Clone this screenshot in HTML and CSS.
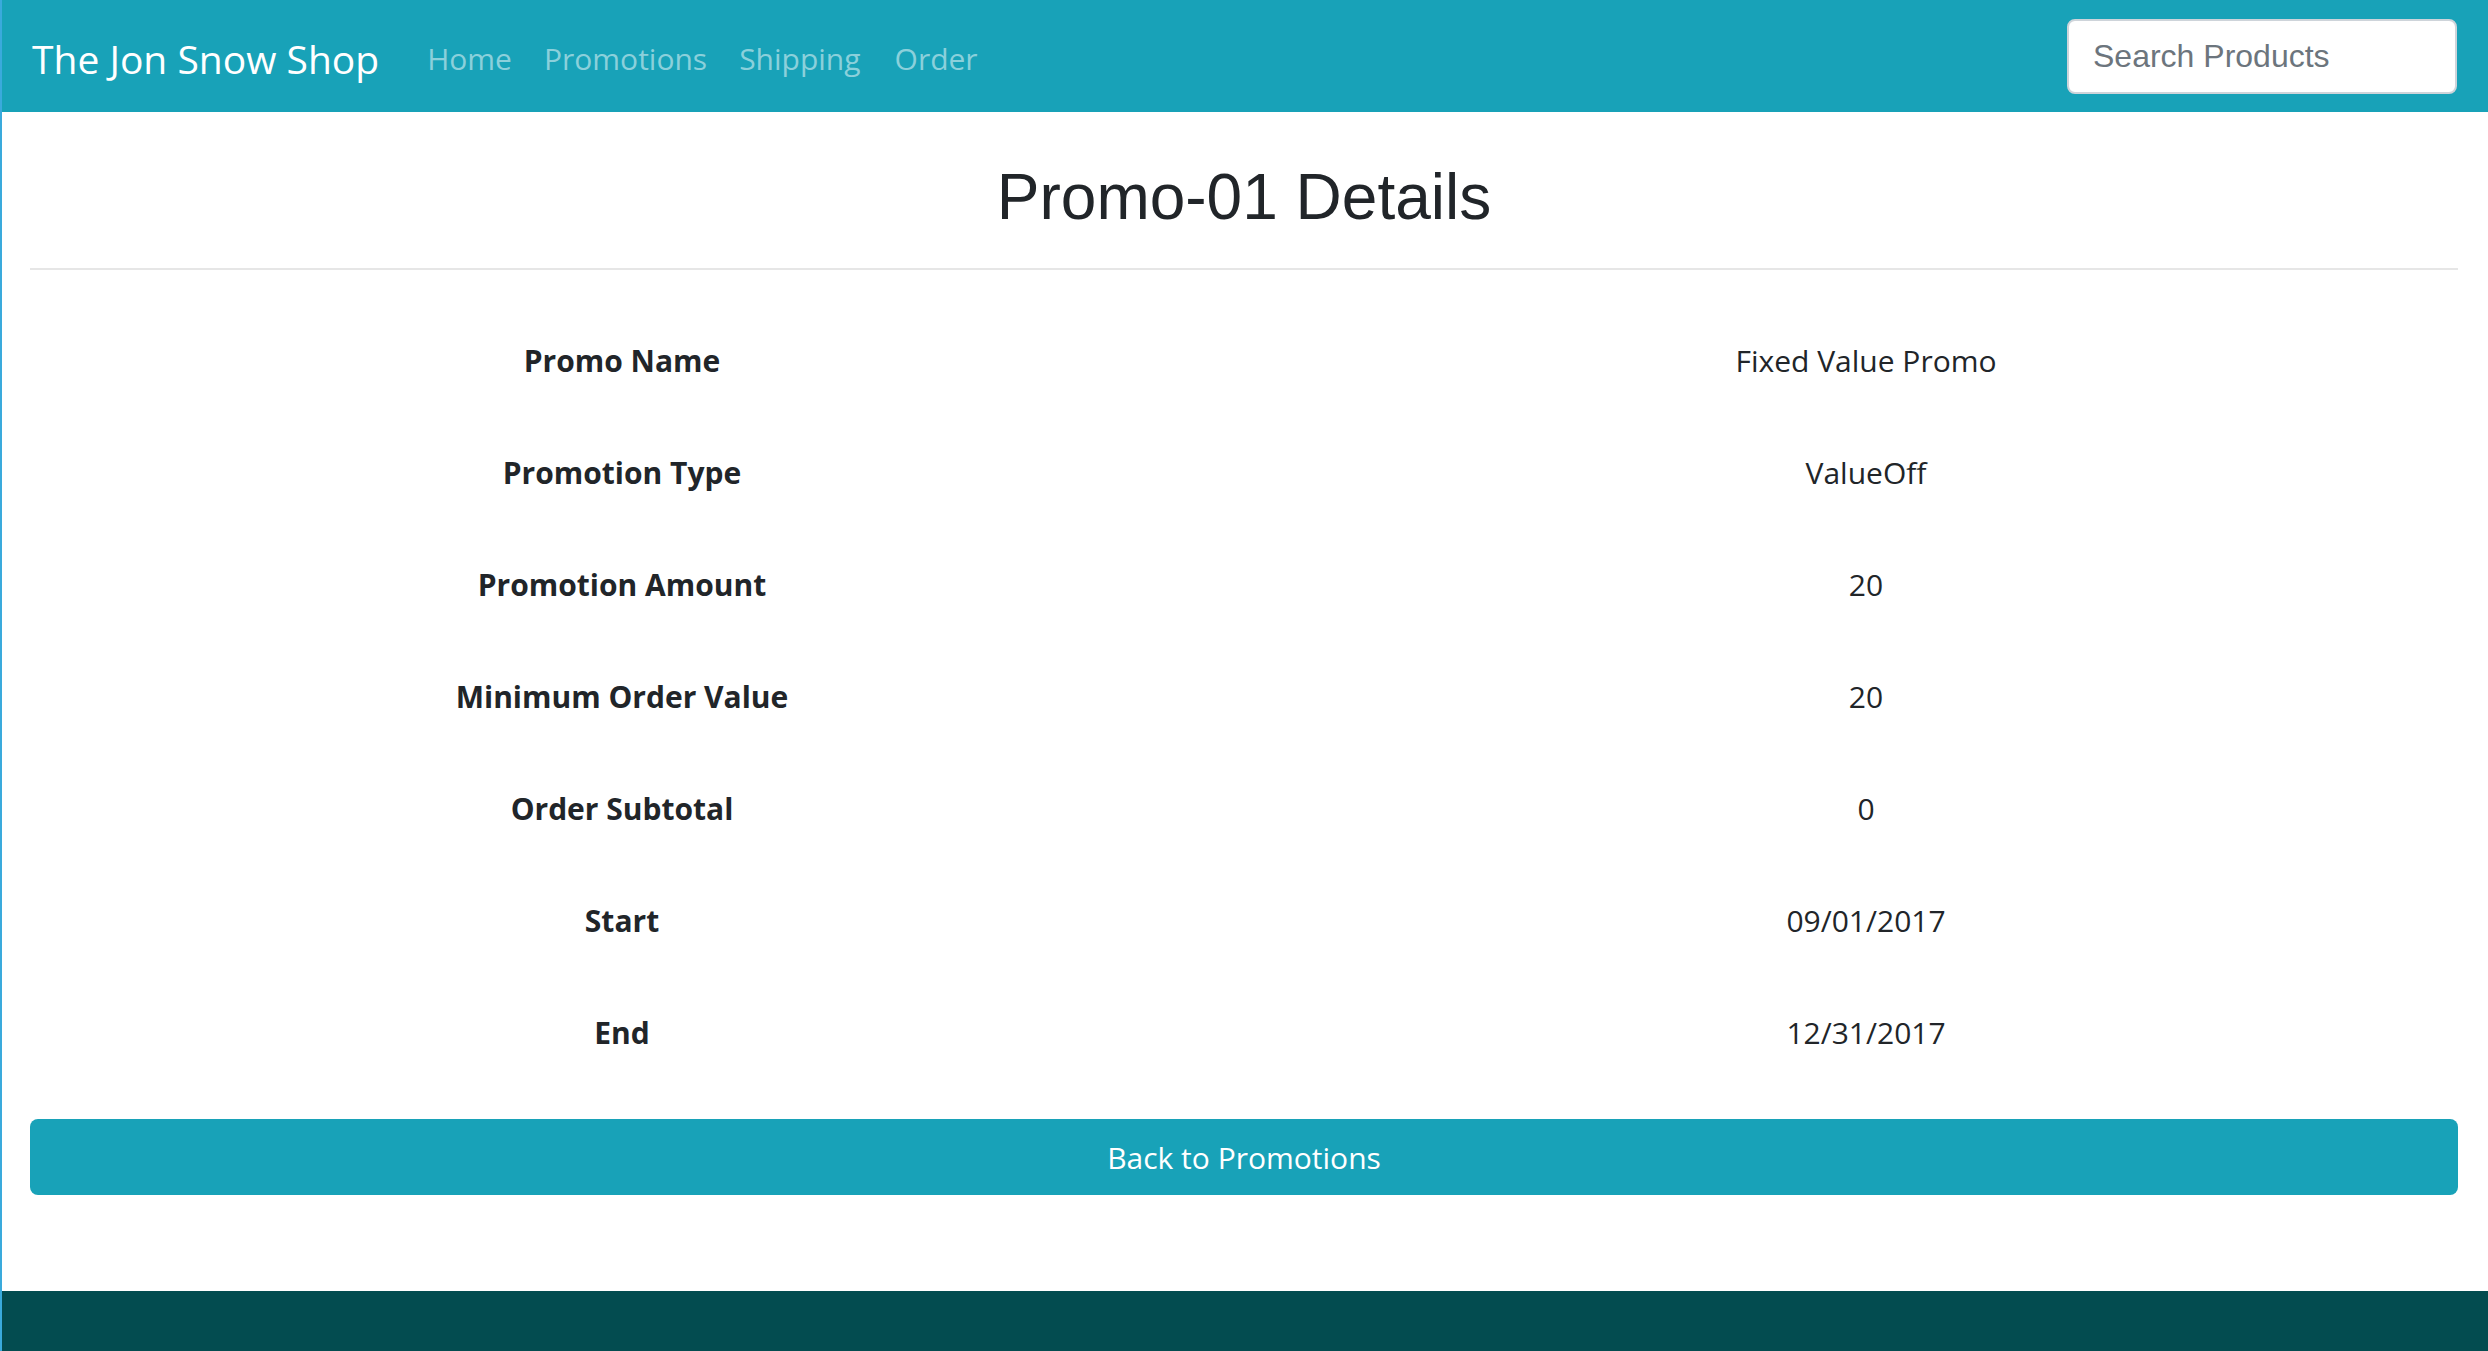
FILE: index.html
```html
<!DOCTYPE html>
<html lang="en">
<head>
<meta charset="utf-8">
<title>Promo-01 Details</title>
<link rel="stylesheet" href="styles.css">
</head>
<body>
<nav class="navbar">
  <a class="brand" href="#">The Jon Snow Shop</a>
  <ul class="nav">
    <li><a class="nav-link" href="#">Home</a></li>
    <li><a class="nav-link" href="#">Promotions</a></li>
    <li><a class="nav-link" href="#">Shipping</a></li>
    <li><a class="nav-link" href="#">Order</a></li>
  </ul>
  <input class="search" type="text" placeholder="Search Products">
</nav>
<main class="container">
  <h2 class="title">Promo-01 Details</h2>
  <hr class="divider">
  <dl class="details">
    <dt>Promo Name</dt><dd>Fixed Value Promo</dd>
    <dt>Promotion Type</dt><dd>ValueOff</dd>
    <dt>Promotion Amount</dt><dd>20</dd>
    <dt>Minimum Order Value</dt><dd>20</dd>
    <dt>Order Subtotal</dt><dd>0</dd>
    <dt>Start</dt><dd>09/01/2017</dd>
    <dt>End</dt><dd>12/31/2017</dd>
  </dl>
  <a class="btn" href="#">Back to Promotions</a>
</main>
<footer class="footer"></footer>
</body>
</html>
```
FILE: styles.css
```css
* { box-sizing: border-box; }

html, body { margin: 0; padding: 0; }

body {
  border-left: 2px solid #3aaadc;
  font-family: "Segoe UI", "Open Sans", "Noto Sans", sans-serif;
  color: #212529;
  background: #ffffff;
  min-height: 1351px;
}

.navbar {
  display: flex;
  align-items: center;
  height: 112px;
  padding: 0 31px 0 30px;
  background: #18a2b8;
}

.brand {
  font-size: 39px;
  line-height: 60px;
  padding: 13px 0 7px;
  margin-right: 32px;
  color: #ffffff;
  text-decoration: none;
  white-space: nowrap;
}

.nav {
  display: flex;
  list-style: none;
  margin: 0;
  padding: 0;
}

.nav-link {
  display: block;
  padding: 19px 16px 13px;
  font-size: 30px;
  line-height: 48px;
  color: #8bd0db;
  text-decoration: none;
}

.nav li:last-child .nav-link {
  padding-left: 18px;
}

.search {
  margin-left: auto;
  width: 390px;
  height: 75px;
  padding: 0 24px;
  border: 2px solid #ced4da;
  border-radius: 8px;
  background: #ffffff;
  font-family: "Liberation Sans", Arial, sans-serif;
  font-size: 32px;
  color: #495057;
}

.search::placeholder { color: #6c757d; }

.container {
  padding: 0 30px 0 28px;
}

.title {
  margin: 47px 0 0;
  font-family: "Liberation Sans", Arial, sans-serif;
  font-weight: normal;
  font-size: 64px;
  line-height: 77px;
  text-align: center;
  color: #212529;
}

.divider {
  margin: 32px 0 35px;
  border: 0;
  border-top: 2px solid #e6e6e6;
  height: 0;
}

.details {
  display: grid;
  grid-template-columns: 1fr 1fr;
  column-gap: 60px;
  margin: 0;
}

.details dt,
.details dd {
  margin: 0;
  height: 112px;
  display: flex;
  align-items: center;
  justify-content: center;
  font-size: 30px;
  line-height: 48px;
}

.details dt { font-weight: 700; }

.btn {
  display: flex;
  align-items: center;
  justify-content: center;
  height: 76px;
  margin: 30px 0 96px;
  border-radius: 8px;
  background: #18a2b8;
  color: #ffffff;
  font-size: 30px;
  text-decoration: none;
}

.footer {
  height: 60px;
  background: #034c50;
}
```
